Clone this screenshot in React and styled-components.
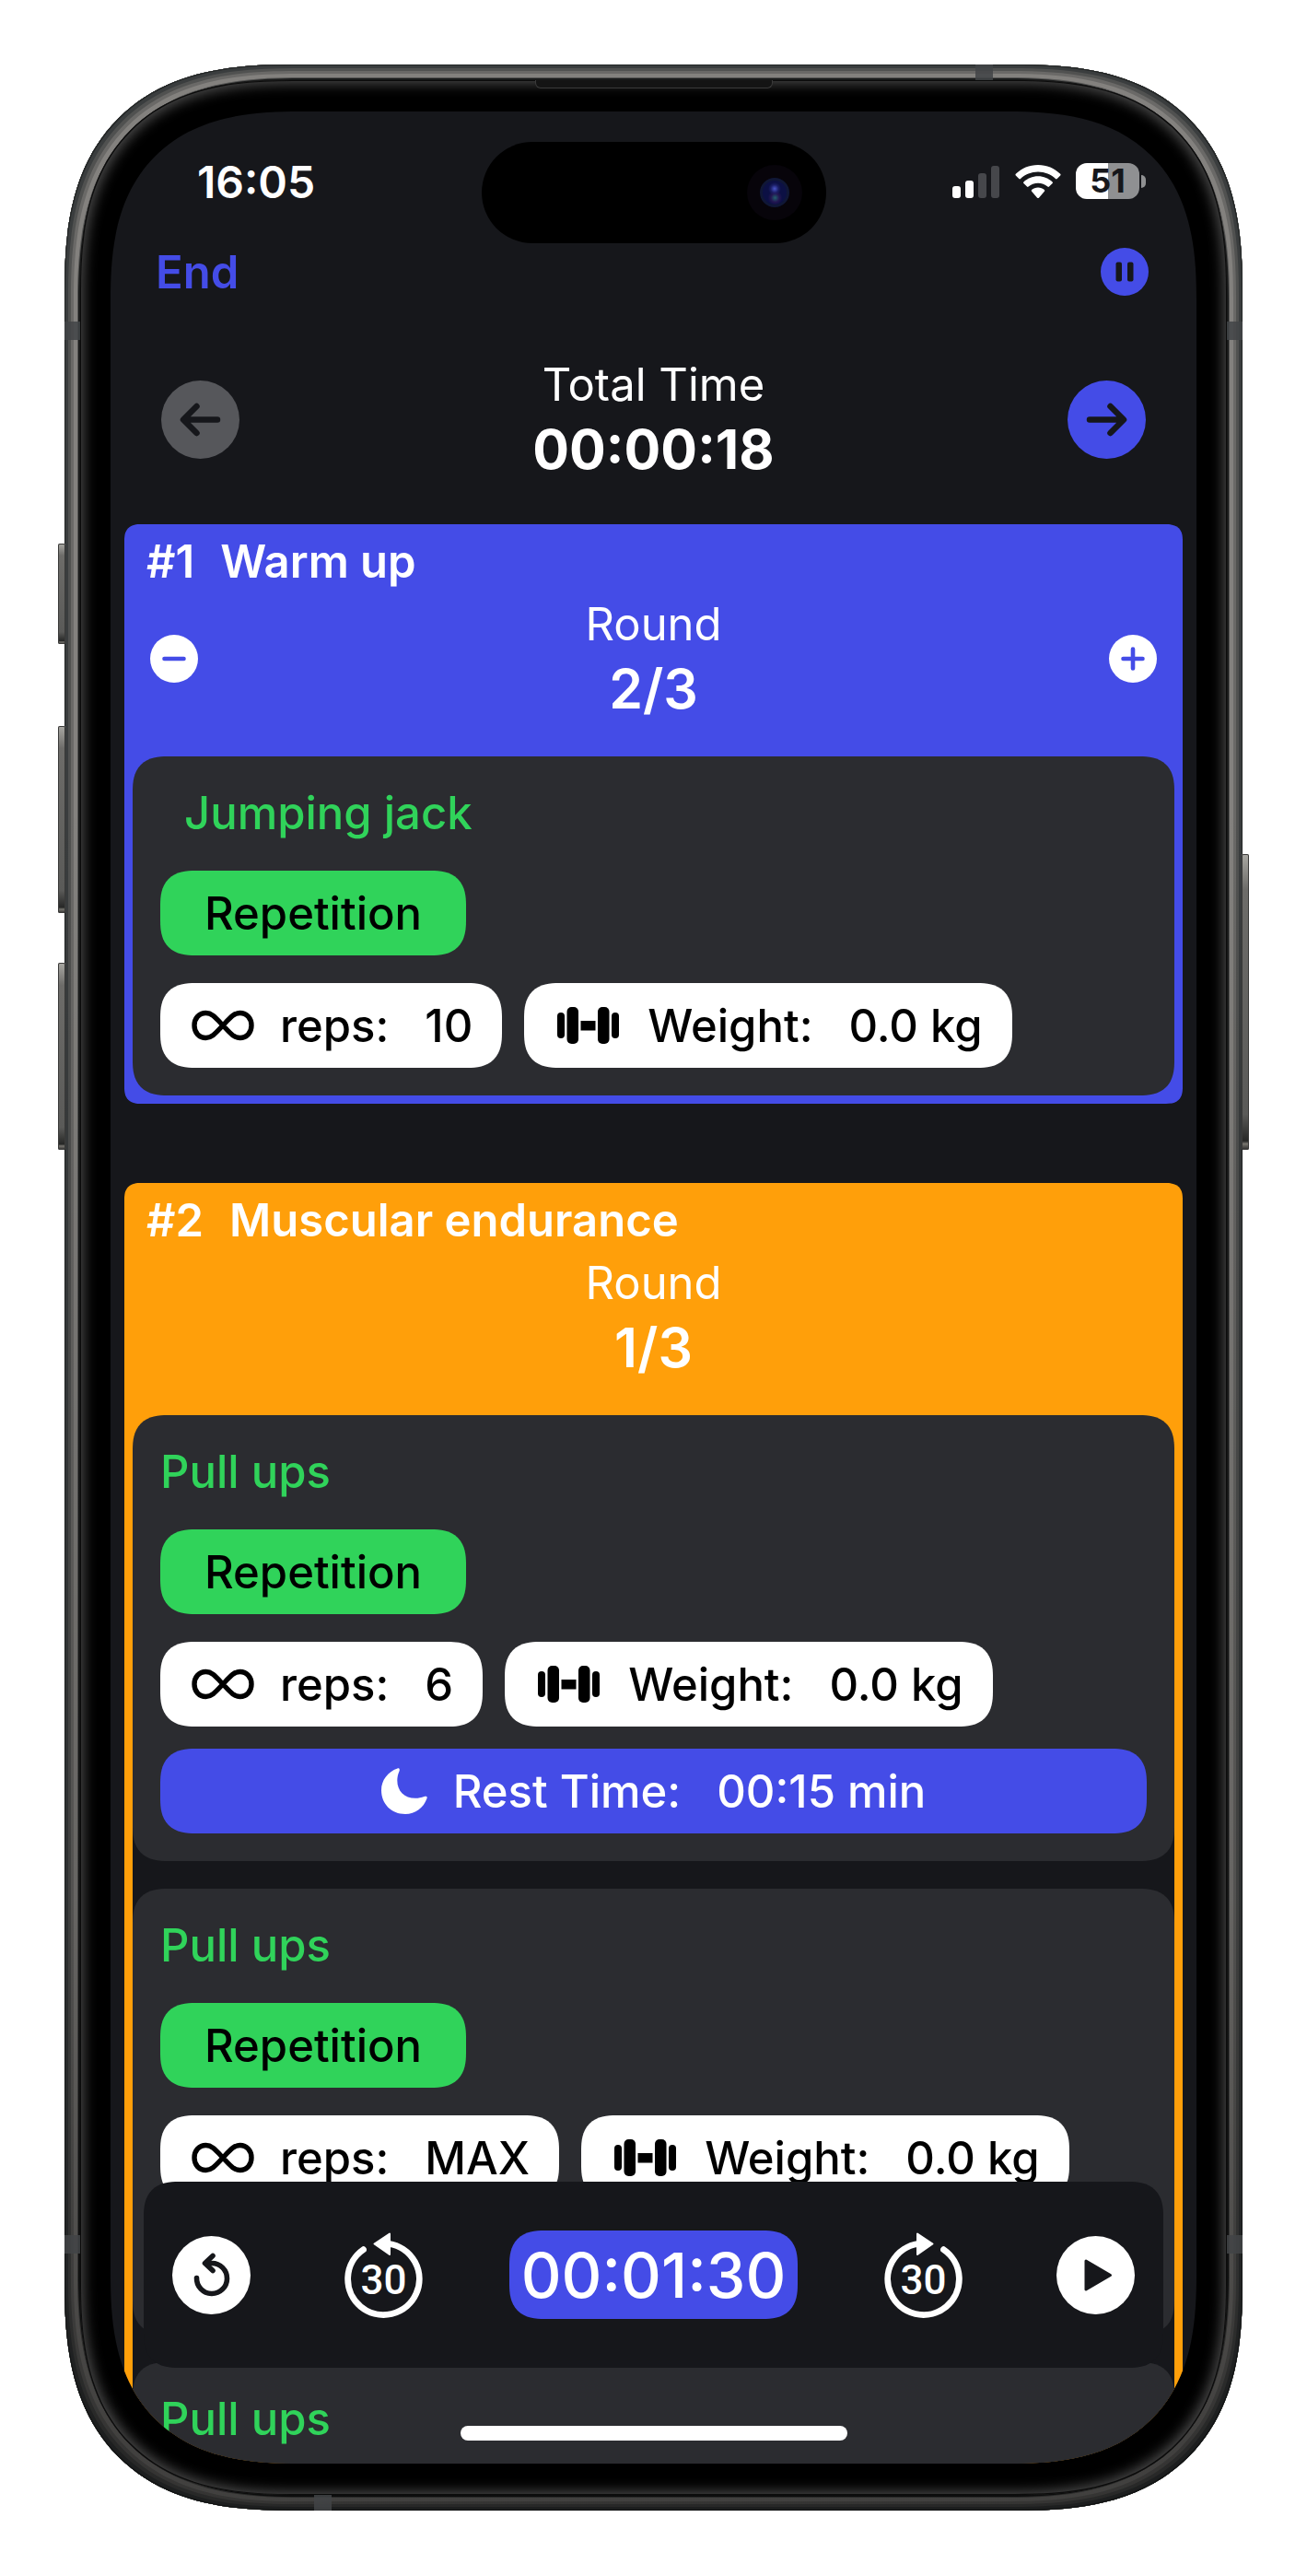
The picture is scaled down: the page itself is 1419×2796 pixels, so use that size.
import React from "react";
import styled, { createGlobalStyle } from "styled-components";

const color = {
  ink: "#16171b",
  card: "#2b2c30",
  blue: "#444ce7",
  orange: "#ff9f0a",
  green: "#30d35a",
  white: "#ffffff",
  muted: "#56575b",
};

const GlobalStyle = createGlobalStyle`
  *, *::before, *::after { box-sizing: border-box; }
  body {
    margin: 0;
    background: #ffffff;
    font-family: Inter, "Liberation Sans", sans-serif;
    font-size: 49px;
    line-height: 64px;
    color: ${color.white};
    -webkit-font-smoothing: antialiased;
  }
  h1, h2, h3, p, ul { margin: 0; padding: 0; font: inherit; }
  ul { list-style: none; }
  button {
    margin: 0;
    padding: 0;
    border: 0;
    background: none;
    font: inherit;
    color: inherit;
    cursor: pointer;
  }
  svg { display: block; flex: none; }
`;

/* ---------- device ---------- */

const Page = styled.div`
  display: flex;
  height: 100vh;
  min-height: 1400px;
  padding: 70px 70px 71px;
`;

const Phone = styled.div`
  position: relative;
  flex: 1;
  display: flex;
  padding: 17px;
  border-radius: 247px;
  corner-shape: superellipse(1.36);
  background: #1f2121;
  box-shadow:
    inset 0 0 0 1px #232626,
    inset 0 0 0 4px #3a3d3e,
    inset 0 0 0 7px #505150,
    inset 0 0 0 10px #6a6967,
    inset 0 0 0 14px #83817e,
    inset 0 0 0 15px #555554,
    inset 0 0 0 17px #1a1b1b;
`;

const RimShade = styled.div`
  position: absolute;
  inset: 0;
  border-radius: inherit;
  corner-shape: inherit;
  background: linear-gradient(rgba(0, 0, 0, 0) 30%, rgba(0, 0, 0, 0.22) 75%, rgba(0, 0, 0, 0.5) 97%);
`;

const SideButton = styled.span`
  position: absolute;
  top: ${(p) => p.$top}px;
  ${(p) => p.$side}: -7px;
  width: 8px;
  height: ${(p) => p.$length}px;
  border-radius: 2px;
  background: linear-gradient(#a9a8a3, #6d6c69 12%, #5a5a58 88%, #262726 97%, #77756f 98%, #2a2a2a);
  box-shadow: inset 0 0 0 1px #3a3a39;
`;

const Antenna = styled.span`
  position: absolute;
  background: rgba(66, 68, 70, 0.85);
  ${(p) => p.$at}
`;

const Bezel = styled.div`
  position: relative;
  flex: 1;
  display: flex;
  min-width: 0;
  padding: 34px 33px;
  border-radius: 230px;
  corner-shape: superellipse(1.36);
  background: #000000;
  box-shadow:
    inset 0 0 0 1px #0b0b0b,
    inset 0 0 14px 4px #4a4a4a;
`;

const Earpiece = styled.span`
  position: absolute;
  top: 0;
  left: 50%;
  width: 258px;
  height: 9px;
  margin-left: -129px;
  border: 1px solid #3a3a3a;
  border-top: 0;
  border-radius: 0 0 6px 6px;
  background: #141414;
`;

const Screen = styled.main`
  position: relative;
  flex: 1;
  min-width: 0;
  overflow: hidden;
  border-radius: 205px;
  corner-shape: superellipse(1.36);
  background: ${color.ink};
`;

/* ---------- status bar ---------- */

const StatusBar = styled.header`
  display: grid;
  grid-template-columns: 1fr 374px 1fr;
  align-items: start;
  padding-top: 33px;
`;

const Clock = styled.time`
  padding: 14px 0 0 94px;
  font-size: 48px;
  line-height: 60px;
  font-weight: 600;
`;

const Island = styled.div`
  display: flex;
  align-items: center;
  justify-content: flex-end;
  height: 110px;
  padding-right: 26px;
  border-radius: 55px;
  background: #000000;
`;

const Lens = styled.span`
  display: grid;
  place-items: center;
  width: 60px;
  height: 60px;
  border-radius: 50%;
  background: #07040a;

  &::after {
    content: "";
    width: 32px;
    height: 32px;
    border-radius: 50%;
    background:
      radial-gradient(circle at 50% 34%, #4a55c8 0, rgba(35, 38, 120, 0.6) 20%, transparent 32%),
      radial-gradient(circle at 52% 72%, #23606e 0, rgba(50, 25, 90, 0.6) 20%, transparent 34%),
      #0c1044;
    border: 3px solid #101736;
  }
`;

const StatusIcons = styled.div`
  display: flex;
  align-items: center;
  justify-content: flex-end;
  gap: 16px;
  padding: 23px 55px 0 0;
`;

const Battery = styled.span`
  display: flex;
  align-items: center;
  gap: 2px;

  &::after {
    content: "";
    width: 5px;
    height: 14px;
    border-radius: 0 5px 5px 0;
    background: #8f9092;
  }
`;

const BatteryLevel = styled.span`
  display: block;
  width: 69px;
  height: 39px;
  border-radius: 12px;
  background: linear-gradient(to right, ${color.white} 51%, #8f9092 51%);
  color: ${color.ink};
  font-size: 36px;
  line-height: 39px;
  font-weight: 700;
  text-align: center;
`;

/* ---------- shared controls ---------- */

const NavBar = styled.nav`
  display: flex;
  align-items: center;
  justify-content: space-between;
  height: 62px;
  padding: 0 52px 0 49px;
`;

const EndButton = styled.button`
  padding-top: 2px;
  color: ${color.blue};
  font-weight: 600;
`;

const Stepper = styled.div`
  display: flex;
  align-items: center;
  justify-content: space-between;
  min-height: 138px;
  padding: 0 ${(p) => p.$inset}px;
`;

const Readout = styled.div`
  flex: 1;
  display: flex;
  flex-direction: column;
  gap: 2px;
  text-align: center;
`;

const ReadoutValue = styled.p`
  font-size: 59px;
  line-height: 72px;
  font-weight: ${(p) => p.$weight};
`;

const RoundButton = styled.button`
  display: grid;
  place-items: center;
  width: ${(p) => p.$size}px;
  height: ${(p) => p.$size}px;
  border-radius: 50%;
  background: ${(p) => p.$fill};
  color: ${(p) => p.$ink};
`;

/* ---------- workout ---------- */

const Summary = styled.section`
  padding: 60px 0 45px;
`;

const Sections = styled.div`
  display: flex;
  flex-direction: column;
  gap: 86px;
  padding: 0 15px;
`;

const Section = styled.section`
  padding: 0 9px 9px;
  border-radius: 18px;
  corner-shape: superellipse(1.36);
  background: ${(p) => p.$tint};
`;

const SectionHeader = styled.header`
  display: flex;
  flex-direction: column;
  gap: 4px;
  padding: 9px 0 37px;
`;

const SectionTitle = styled.h2`
  display: flex;
  gap: 28px;
  padding-left: 15px;
  font-weight: 600;
`;

const CardList = styled.ul`
  display: flex;
  flex-direction: column;
  gap: 30px;
  background: linear-gradient(${(p) => p.$tint} 60px, ${(p) => p.$gutter} 60px);
`;

const Card = styled.li`
  display: flex;
  flex-direction: column;
  align-items: flex-start;
  padding: 30px;
  border-radius: 38px;
  corner-shape: superellipse(1.36);
  background: ${color.card};
  font-weight: 500;
`;

const CardTitle = styled.h3`
  padding-left: ${(p) => (p.$indented ? 26 : 0)}px;
  margin-bottom: 30px;
  color: ${color.green};
`;

const Pill = styled.div`
  display: flex;
  align-items: center;
  height: 92px;
  border-radius: 38px;
  corner-shape: superellipse(1.36);
  line-height: 92px;
  white-space: nowrap;

  span {
    padding-top: 2px;
  }
`;

const KindPill = styled(Pill)`
  padding: 0 48px;
  background: ${color.green};
  color: #000000;
`;

const Metrics = styled.div`
  display: flex;
  gap: 24px;
  margin-top: 30px;
`;

const MetricPill = styled(Pill)`
  padding: 0 32px 0 34px;
  background: ${color.white};
  color: #000000;
`;

const RestPill = styled(Pill)`
  align-self: stretch;
  justify-content: center;
  margin-top: 24px;
  background: ${color.blue};
`;

const MetricLabel = styled.span`
  margin: 0 39px 0 28px;
`;

/* ---------- player ---------- */

const Player = styled.footer`
  position: absolute;
  right: 36px;
  bottom: 104px;
  left: 36px;
  display: flex;
  align-items: center;
  justify-content: space-between;
  height: 202px;
  padding: 0 31px;
  border-radius: 38px;
  corner-shape: superellipse(1.36);
  background: ${color.ink};
`;

const PlayerGroup = styled.div`
  display: flex;
  align-items: center;
  gap: 102px;
`;

const Countdown = styled.output`
  height: 96px;
  padding: 0 13px;
  border-radius: 38px;
  corner-shape: superellipse(1.36);
  background: ${color.blue};
  font-size: 68px;
  line-height: 96px;
  font-weight: 500;
`;

const HomeIndicator = styled.span`
  position: absolute;
  bottom: 25px;
  left: 50%;
  width: 420px;
  height: 16px;
  margin-left: -210px;
  border-radius: 8px;
  background: ${color.white};
`;

/* ---------- icons ---------- */

const line = {
  fill: "none",
  stroke: "currentColor",
  strokeLinecap: "round",
  strokeLinejoin: "round",
};

const SignalIcon = () => (
  <svg width="52" height="36" viewBox="0 0 52 36" aria-hidden="true">
    <rect x="0" y="23" width="9" height="13" rx="3" fill="#fff" />
    <rect x="14" y="17" width="9" height="19" rx="3" fill="#fff" />
    <rect x="28" y="9" width="9" height="27" rx="3" fill="#46474b" />
    <rect x="42" y="1" width="9" height="35" rx="3" fill="#46474b" />
  </svg>
);

const WifiIcon = () => (
  <svg width="50" height="38" viewBox="0 0 50 38" aria-hidden="true">
    <path
      fill="#fff"
      d="M25 1C34.500 1 43 4.700 49.200 10.800C49.700 11.300 49.700 12 49.200 12.500L45.700 16C45.200 16.500 44.500 16.500 44 16C39 11.300 32.400 8.500 25 8.500S11 11.300 6 16C5.500 16.500 4.800 16.500 4.300 16L.8 12.500C.3 12 .3 11.300.8 10.800C7 4.700 15.500 1 25 1Z"
    />
    <path
      fill="#fff"
      d="M25 13.200C31 13.200 36.500 15.600 40.600 19.400C41.100 19.900 41.100 20.600 40.600 21.100L37 24.600C36.500 25.100 35.900 25.100 35.400 24.600C32.600 22.200 29 20.800 25 20.800S17.400 22.200 14.600 24.600C14.100 25.100 13.500 25.100 13 24.600L9.400 21.100C8.900 20.600 8.900 19.900 9.400 19.400C13.500 15.600 19 13.200 25 13.200Z"
    />
    <path
      fill="#fff"
      d="M25 25.400C27.700 25.400 30.100 26.400 31.900 28C32.400 28.500 32.400 29.200 31.900 29.700L25.900 36.700C25.400 37.200 24.600 37.200 24.100 36.700L18.100 29.700C17.600 29.200 17.600 28.500 18.100 28C19.900 26.400 22.300 25.400 25 25.400Z"
    />
  </svg>
);

const PauseIcon = () => (
  <svg width="52" height="52" viewBox="0 0 52 52" fill="currentColor" aria-hidden="true">
    <rect x="16.500" y="15.500" width="6.500" height="21" rx="2" />
    <rect x="29" y="15.500" width="6.500" height="21" rx="2" />
  </svg>
);

const ArrowIcon = ({ right }) => (
  <svg width="85" height="85" viewBox="0 0 85 85" strokeWidth="6.500" {...line} aria-hidden="true">
    <path
      d={
        right
          ? "M24 42.500H60M46.500 28L61 42.500L46.500 57"
          : "M61 42.500H25M38.500 28L24 42.500L38.500 57"
      }
    />
  </svg>
);

const StepIcon = ({ plus }) => (
  <svg width="52" height="52" viewBox="0 0 52 52" strokeWidth="4.600" {...line} aria-hidden="true">
    <path d={plus ? "M15.500 26H36.500M26 15.500V36.500" : "M15.500 26H36.500"} />
  </svg>
);

const InfinityIcon = () => (
  <svg width="68" height="34" viewBox="0 0 68 34" strokeWidth="5.400" {...line} aria-hidden="true">
    <path d="M34 17C26 8.500 22 3.500 15.500 3.500C8 3.500 3 9.300 3 17S8 30.500 15.500 30.500C22 30.500 26 25.500 34 17C42 8.500 46 3.500 52.500 3.500C60 3.500 65 9.300 65 17S60 30.500 52.500 30.500C46 30.500 42 25.500 34 17Z" />
  </svg>
);

const DumbbellIcon = () => (
  <svg width="72" height="40" viewBox="0 0 72 40" fill="currentColor" aria-hidden="true">
    <rect x="2" y="6" width="8" height="28" rx="4" />
    <rect x="12.500" y="0" width="12.500" height="40" rx="5" />
    <rect x="27.500" y="15" width="16" height="10.500" />
    <rect x="46" y="0" width="12.500" height="40" rx="5" />
    <rect x="61" y="6" width="8" height="28" rx="4" />
  </svg>
);

const MoonIcon = () => (
  <svg width="50" height="50" viewBox="0 0 50 50" fill="currentColor" aria-hidden="true">
    <path d="M17.500 .5C19.500-.2 20.300 1.200 19.500 3.500C18 7 17.300 10 17.300 13.500C17.300 25 25 32.800 37 32.800C40.500 32.800 43.500 32.200 46.500 31C49 30.200 50.200 31.200 49.500 33C46 43 37 50 26 50C11 50 0 39 0 24C0 13.500 7 4 17.500 .5Z" />
  </svg>
);

const RestartIcon = () => (
  <svg width="85" height="85" viewBox="0 0 85 85" strokeWidth="5.600" {...line} aria-hidden="true">
    <path d="M26.500 45.500A16.500 16.500 0 1 0 43 29.500H36.500" />
    <path d="M44 21.500L35.500 29.500L44 37.500" />
  </svg>
);

const SkipIcon = ({ forward }) => (
  <svg width="85" height="93" viewBox="0 0 85 93" aria-hidden="true">
    <g transform={forward ? "translate(85 0) scale(-1 1)" : undefined}>
      <path strokeWidth="6.800" {...line} d="M20.500 18.700A38.800 38.800 0 1 0 48 12.300" />
      <path
        fill="currentColor"
        stroke="currentColor"
        strokeWidth="2"
        strokeLinejoin="round"
        d="M32.500 12.500L49 1.500V24Z"
      />
    </g>
    <text
      x="42.500"
      y="67"
      textAnchor="middle"
      fill="currentColor"
      fontFamily="Roboto, sans-serif"
      fontSize="44"
      fontWeight="500"
    >
      30
    </text>
  </svg>
);

const PlayIcon = () => (
  <svg width="85" height="85" viewBox="0 0 85 85" fill="currentColor" stroke="currentColor" strokeWidth="3" strokeLinejoin="round" aria-hidden="true">
    <path d="M32 27L58.500 42.500L32 58Z" />
  </svg>
);

/* ---------- data ---------- */

const workout = [
  {
    number: 1,
    name: "Warm up",
    tint: color.blue,
    gutter: color.blue,
    round: "2/3",
    adjustable: true,
    exercises: [{ name: "Jumping jack", reps: "10", indented: true }],
  },
  {
    number: 2,
    name: "Muscular endurance",
    tint: color.orange,
    gutter: color.ink,
    round: "1/3",
    adjustable: false,
    exercises: [
      { name: "Pull ups", reps: "6", rest: "00:15 min" },
      { name: "Pull ups", reps: "MAX", rest: "00:15 min" },
      { name: "Pull ups", reps: "MAX", rest: "00:15 min" },
    ],
  },
];

/* ---------- views ---------- */

function ExerciseCard({ name, reps, rest, indented }) {
  return (
    <Card>
      <CardTitle $indented={indented}>{name}</CardTitle>
      <KindPill>
        <span>Repetition</span>
      </KindPill>
      <Metrics>
        <MetricPill>
          <InfinityIcon />
          <MetricLabel>reps:</MetricLabel>
          <span>{reps}</span>
        </MetricPill>
        <MetricPill>
          <DumbbellIcon />
          <MetricLabel>Weight:</MetricLabel>
          <span>0.0 kg</span>
        </MetricPill>
      </Metrics>
      {rest && (
        <RestPill>
          <MoonIcon />
          <MetricLabel>Rest Time:</MetricLabel>
          <span>{rest}</span>
        </RestPill>
      )}
    </Card>
  );
}

function WorkoutSection({ number, name, tint, gutter, round, adjustable, exercises }) {
  return (
    <Section $tint={tint}>
      <SectionHeader>
        <SectionTitle>
          <span>#{number}</span>
          <span>{name}</span>
        </SectionTitle>
        <Stepper $inset={19}>
          {adjustable && (
            <RoundButton $size={52} $fill={color.white} $ink={tint} aria-label="Fewer rounds">
              <StepIcon />
            </RoundButton>
          )}
          <Readout>
            <p>Round</p>
            <ReadoutValue $weight={600}>{round}</ReadoutValue>
          </Readout>
          {adjustable && (
            <RoundButton $size={52} $fill={color.white} $ink={tint} aria-label="More rounds">
              <StepIcon plus />
            </RoundButton>
          )}
        </Stepper>
      </SectionHeader>
      <CardList $tint={tint} $gutter={gutter}>
        {exercises.map((exercise, index) => (
          <ExerciseCard key={index} {...exercise} />
        ))}
      </CardList>
    </Section>
  );
}

export default function App() {
  return (
    <>
      <GlobalStyle />
      <Page>
        <Phone>
          <RimShade />
          <SideButton $side="left" $top={520} $length={109} />
          <SideButton $side="left" $top={718} $length={203} />
          <SideButton $side="left" $top={975} $length={203} />
          <SideButton $side="right" $top={857} $length={321} />
          <Antenna $at="top: 279px; left: 0; width: 17px; height: 20px;" />
          <Antenna $at="top: 279px; right: 0; width: 17px; height: 20px;" />
          <Antenna $at="bottom: 279px; left: 0; width: 17px; height: 20px;" />
          <Antenna $at="bottom: 279px; right: 0; width: 17px; height: 20px;" />
          <Antenna $at="top: 0; right: 271px; width: 19px; height: 17px;" />
          <Antenna $at="bottom: 0; left: 271px; width: 19px; height: 17px;" />
          <Bezel>
            <Earpiece />
            <Screen>
              <StatusBar>
                <Clock>16:05</Clock>
                <Island>
                  <Lens />
                </Island>
                <StatusIcons>
                  <SignalIcon />
                  <WifiIcon />
                  <Battery>
                    <BatteryLevel>51</BatteryLevel>
                  </Battery>
                </StatusIcons>
              </StatusBar>
              <NavBar>
                <EndButton>End</EndButton>
                <RoundButton $size={52} $fill={color.blue} $ink={color.ink} aria-label="Pause workout">
                  <PauseIcon />
                </RoundButton>
              </NavBar>
              <Summary>
                <Stepper $inset={55}>
                  <RoundButton $size={85} $fill={color.muted} $ink={color.ink} aria-label="Previous exercise">
                    <ArrowIcon />
                  </RoundButton>
                  <Readout>
                    <h1>Total Time</h1>
                    <ReadoutValue $weight={700}>00:00:18</ReadoutValue>
                  </Readout>
                  <RoundButton $size={85} $fill={color.blue} $ink={color.ink} aria-label="Next exercise">
                    <ArrowIcon right />
                  </RoundButton>
                </Stepper>
              </Summary>
              <Sections>
                {workout.map((section) => (
                  <WorkoutSection key={section.number} {...section} />
                ))}
              </Sections>
              <Player>
                <PlayerGroup>
                  <RoundButton $size={85} $fill={color.white} $ink={color.ink} aria-label="Restart">
                    <RestartIcon />
                  </RoundButton>
                  <button aria-label="Back 30 seconds">
                    <SkipIcon />
                  </button>
                </PlayerGroup>
                <Countdown>00:01:30</Countdown>
                <PlayerGroup>
                  <button aria-label="Forward 30 seconds">
                    <SkipIcon forward />
                  </button>
                  <RoundButton $size={85} $fill={color.white} $ink={color.ink} aria-label="Play">
                    <PlayIcon />
                  </RoundButton>
                </PlayerGroup>
              </Player>
              <HomeIndicator />
            </Screen>
          </Bezel>
        </Phone>
      </Page>
    </>
  );
}
